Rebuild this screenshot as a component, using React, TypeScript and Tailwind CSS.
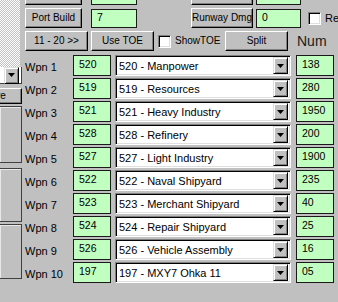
import React from "react";

const rows: [string, string, string][] = [
  ["520", "520 - Manpower", "138"],
  ["519", "519 - Resources", "280"],
  ["521", "521 - Heavy Industry", "1950"],
  ["528", "528 - Refinery", "200"],
  ["527", "527 - Light Industry", "1900"],
  ["522", "522 - Naval Shipyard", "235"],
  ["523", "523 - Merchant Shipyard", "40"],
  ["524", "524 - Repair Shipyard", "25"],
  ["526", "526 - Vehicle Assembly", "16"],
  ["197", "197 - MXY7 Ohka 11", "05"],
];

function Btn({ children, w, className = "" }: { children?: React.ReactNode; w: string; className?: string }) {
  return (
    <div
      className={`h-[20px] ${w} shrink-0 flex items-center justify-center bg-[#c0c0c0] border border-t-white border-l-white border-r-black border-b-black shadow-[inset_-1px_-1px_0_#808080] text-[10px] leading-none text-black whitespace-nowrap ${className}`}
    >
      {children}
    </div>
  );
}

function Green({ children, w, className = "" }: { children?: React.ReactNode; w: string; className?: string }) {
  return (
    <div
      className={`${w} h-[19px] shrink-0 flex items-center pl-[5px] pb-[2px] bg-[#c0ffc0] border border-[#1a1a1a] text-[10.5px] leading-none text-black ${className}`}
    >
      {children}
    </div>
  );
}

function Check({ className = "" }: { className?: string }) {
  return (
    <div
      className={`w-[13px] h-[13px] shrink-0 bg-white border border-t-[#808080] border-l-[#808080] border-r-white border-b-white shadow-[inset_1px_1px_0_#000,inset_-1px_-1px_0_#dfdfdf] ${className}`}
    />
  );
}

function Arrow({ className = "" }: { className?: string }) {
  return (
    <div
      className={`w-[15px] h-[17px] shrink-0 flex items-center justify-center bg-[#c0c0c0] border border-t-[#dfdfdf] border-l-[#dfdfdf] border-r-black border-b-black shadow-[inset_1px_1px_0_#fff,inset_-1px_-1px_0_#808080] ${className}`}
    >
      <svg width="7" height="4" viewBox="0 0 7 4">
        <polygon points="0,0 7,0 3.5,4" fill="#000" />
      </svg>
    </div>
  );
}

export default function App() {
  return (
    <div className="w-[338px] h-[302px] overflow-hidden bg-[#c0c0c0] flex font-['Liberation_Sans',Arial,sans-serif] text-black">
      {/* left strip */}
      <div className="w-[22px] shrink-0 flex flex-col">
        <div className="w-[20px] h-[67px] bg-[image:repeating-conic-gradient(#c0c0c0_0_25%,#ffffff_0_50%)] bg-[length:2px_2px]" />
        <div className="w-[22px] h-[17px] bg-white flex items-center justify-end pr-[2px] border-r border-b border-r-[#404040] border-b-[#404040]">
          <Arrow className="w-[12px] h-[12px]" />
        </div>
        <div className="mt-[4px] w-[22px] h-[16px] overflow-hidden">
          <div className="-ml-[33px] w-[55px] h-[16px] flex items-center justify-center bg-[#c0c0c0] border border-t-white border-l-white border-r-black border-b-black shadow-[inset_-1px_-1px_0_#808080] text-[10px] leading-none">
            Save
          </div>
        </div>
        <div className="mt-[2px] w-[23px] -ml-[1px] h-[57px] border border-[#404040] shadow-[inset_1px_1px_0_#e8e8e8]" />
        <div className="mt-[5px] w-[23px] -ml-[1px] h-[54px] border border-[#404040] shadow-[inset_1px_1px_0_#e8e8e8]" />
        <div className="mt-[2px] w-[23px] -ml-[1px] h-[55px] border border-[#404040] shadow-[inset_1px_1px_0_#e8e8e8]" />
      </div>

      {/* main */}
      <div className="ml-[3px] flex flex-col -mt-[15px]">
        {/* row A (cut off) */}
        <div className="flex items-center h-[20px]">
          <Btn w="w-[57px]"> </Btn>
          <Green w="w-[46px]" className="ml-[9px]" />
          <Btn w="w-[62px]" className="ml-[54px]"> </Btn>
          <Green w="w-[45px]" className="ml-[3px]" />
          <Check className="ml-[7px] -mt-[6px]" />
        </div>
        {/* row B */}
        <div className="flex items-center h-[20px] mt-[3px]">
          <Btn w="w-[57px]">Port Build</Btn>
          <Green w="w-[46px]" className="ml-[9px]">7</Green>
          <Btn w="w-[62px]" className="ml-[54px]">Runway Dmg</Btn>
          <Green w="w-[45px]" className="ml-[3px]">0</Green>
          <Check className="ml-[7px]" />
          <span className="ml-[4px] text-[11px] leading-none whitespace-nowrap">Res</span>
        </div>
        {/* row C */}
        <div className="flex items-center h-[20px] mt-[3px]">
          <Btn w="w-[63px]">11 - 20 &gt;&gt;</Btn>
          <Btn w="w-[63px]" className="ml-[3px]">Use TOE</Btn>
          <Check className="ml-[4px]" />
          <span className="ml-[4px] w-[50px] shrink-0 text-[10px] leading-none whitespace-nowrap">ShowTOE</span>
          <Btn w="w-[63px]">Split</Btn>
          <span className="ml-[9px] text-[14px] leading-none whitespace-nowrap text-[#1a1a1a]">Num</span>
        </div>

        {/* weapon rows */}
        <div className="flex flex-col gap-[2px] mt-[4px]">
          {rows.map(([id, name, num], i) => (
            <div key={i} className="flex h-[21px] items-center">
              <span className="w-[48px] shrink-0 text-[11px] leading-none pt-[4px] whitespace-nowrap">Wpn {i + 1}</span>
              <div className="w-[38px] h-[21px] shrink-0 flex items-center pl-[5px] pb-[3px] bg-[#c0ffc0] border border-[#1a1a1a] text-[10.5px] leading-none">
                {id}
              </div>
              <div className="ml-[4px] w-[176px] h-[21px] shrink-0 flex items-center bg-white border border-t-[#808080] border-l-[#808080] border-r-white border-b-white shadow-[inset_1px_1px_0_#000,inset_-1px_-1px_0_#dfdfdf]">
                <span className="flex-1 pl-[3px] pt-[1px] text-[11px] leading-none whitespace-nowrap overflow-hidden">{name}</span>
                <Arrow className="mr-[2px]" />
              </div>
              <div className="ml-[5px] w-[38px] h-[21px] shrink-0 flex items-center pl-[5px] pb-[3px] bg-[#c0ffc0] border border-[#1a1a1a] text-[10.5px] leading-none">
                {num}
              </div>
            </div>
          ))}
        </div>
      </div>
    </div>
  );
}
